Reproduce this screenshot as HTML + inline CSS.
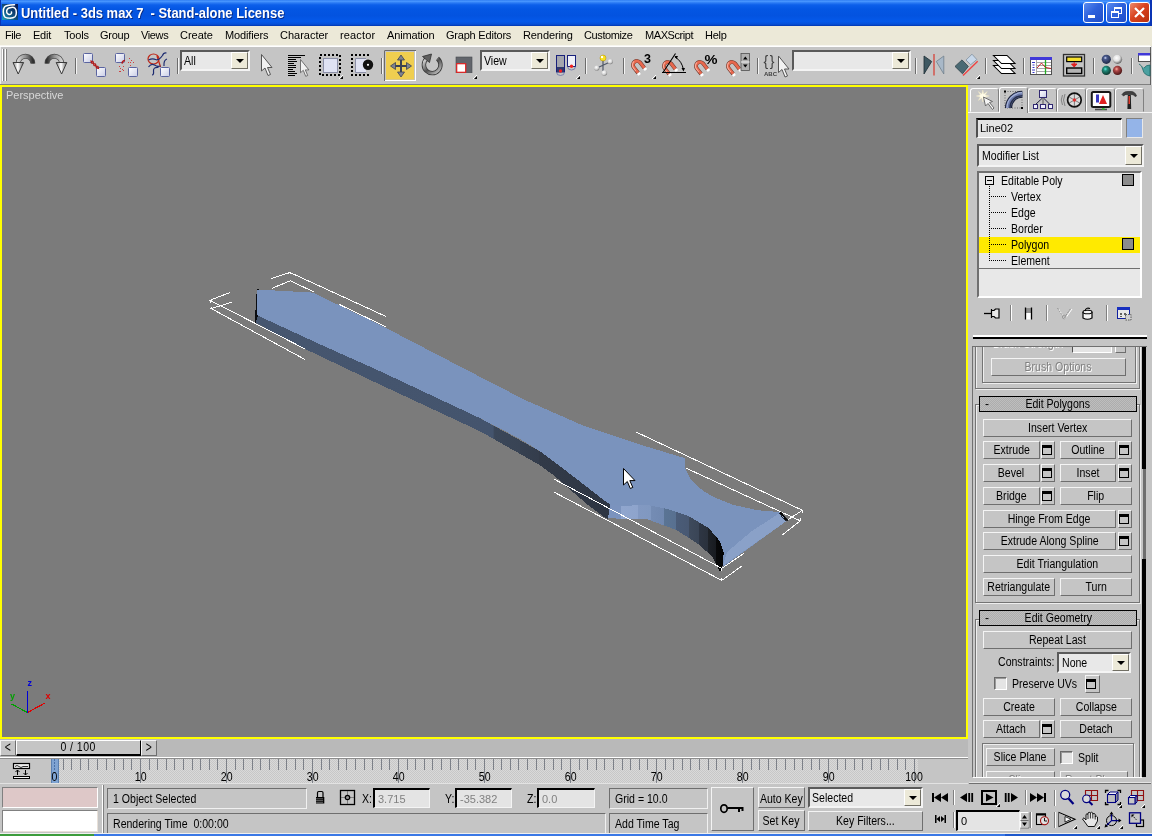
<!DOCTYPE html>
<html>
<head>
<meta charset="utf-8">
<title>Untitled - 3ds max 7 - Stand-alone License</title>
<style>
html,body{margin:0;padding:0;}
body{width:1152px;height:836px;overflow:hidden;background:#c5c5c5;position:relative;will-change:transform;font-family:"Liberation Sans",sans-serif;font-size:11px;color:#000;}
.a{position:absolute;box-sizing:border-box;}
.t{position:absolute;white-space:nowrap;line-height:13px;height:13px;}
/* raised 3ds max button */
.btn{position:absolute;box-sizing:border-box;background:#c5c5c5;border:1px solid;border-color:#f4f4f4 #6e6e6e #6e6e6e #f4f4f4;text-align:center;white-space:nowrap;line-height:15px;font-size:11px;}
/* sunken field */
.fld{position:absolute;box-sizing:border-box;background:#e4e4e4;border:1px solid;border-color:#6e6e6e #fff #fff #6e6e6e;white-space:nowrap;}
.fld2{position:absolute;box-sizing:border-box;background:#e4e4e4;border:2px solid;border-color:#404040 #fff #fff #404040;white-space:nowrap;}
.sepv{position:absolute;width:2px;border-left:1px solid #808080;border-right:1px solid #fff;box-sizing:border-box;}
svg{position:absolute;overflow:visible;}

/* combo */
.cmb{position:absolute;box-sizing:border-box;background:#e8e8e8;border:2px solid;border-color:#5a5a5a #f4f4f4 #f4f4f4 #5a5a5a;}
.cmb .dd{position:absolute;right:0;top:0;bottom:0;width:17px;box-sizing:border-box;background:#ece9d8;border:1px solid;border-color:#fff #716f64 #716f64 #fff;}
.cmb .dd:after{content:"";position:absolute;left:4px;top:50%;margin-top:-2px;border:4px solid transparent;border-top:4px solid #000;border-bottom:none;width:0;height:0;}
.u{display:inline-block;font-size:12px;transform:scaleX(.88);transform-origin:0 50%;white-space:pre;}
.uc{display:inline-block;font-size:12px;transform:scaleX(.88);transform-origin:50% 50%;white-space:pre;margin:0 -20px;}

.tab{position:absolute;box-sizing:border-box;border:1px solid;border-color:#fff #808080 transparent #fff;border-radius:3px 3px 0 0;background:#c5c5c5;}
.tab.act{border-bottom:none;}
.rh{position:absolute;box-sizing:border-box;border:1px solid #000;background:repeating-conic-gradient(#bebebe 0% 25%,#adadad 0% 50%) 0 0/2px 2px;text-align:center;line-height:14px;}
.rh b{position:absolute;left:5px;top:0;font-weight:normal;font-size:12px;}
.dis{color:#808080;text-shadow:1px 1px 0 #fff;}
.chk{position:absolute;box-sizing:border-box;width:13px;height:13px;background:#e4e4e4;border:1px solid;border-color:#6a6a6a #fff #fff #6a6a6a;box-shadow:inset 1px 1px 0 #9a9a9a;}
.wi{position:absolute;left:0px;top:3px;width:10px;height:10px;box-sizing:border-box;border:1px solid #000;border-top-width:3px;}
/* title */
#title{left:0;top:0;width:1152px;height:26px;background:linear-gradient(to bottom,#2e7cf2 0%,#4a98ff 5%,#2a7af4 11%,#0c5fea 19%,#0456e3 35%,#0353e0 60%,#0559ea 82%,#0650d8 93%,#0236b0 100%);}
#title .cap{position:absolute;left:21px;top:5px;font-weight:bold;font-size:14px;color:#fff;line-height:16px;white-space:pre;text-shadow:1px 1px 0 #0a2a80;transform:scaleX(.925);transform-origin:0 50%;}
.wb{position:absolute;top:2px;width:21px;height:21px;box-sizing:border-box;border:1px solid #fff;border-radius:3px;background:linear-gradient(135deg,#5a8cf0 0%,#2e62dc 45%,#1f4dc8 100%);}
.wb.x{background:linear-gradient(135deg,#ec8a6c 0%,#d9431f 45%,#b8300f 100%);}
/* menu */
#menu{left:0;top:26px;width:1152px;height:20px;background:#ece9d8;}
#menu span{position:absolute;top:3px;line-height:13px;font-size:11px;}
/* toolbar */
#tb{left:0;top:46px;width:1152px;height:39px;background:#c5c5c5;border-top:1px solid #fff;border-bottom:1px solid #808080;}
/* viewport */
#vp{left:0;top:85px;width:968px;height:654px;background:#7b7b7b;border:2px solid #ffff00;}
</style>
</head>
<body>
<!-- TITLE BAR -->
<div id="title" class="a">
<svg style="left:2px;top:4px" width="16" height="16" viewBox="0 0 16 16"><defs><linearGradient id="gLogo" x1="0" y1="1" x2="1" y2="0"><stop offset="0" stop-color="#1aa0c0"/><stop offset=".45" stop-color="#10507c"/><stop offset="1" stop-color="#0a1450"/></linearGradient></defs><rect width="16" height="16" fill="url(#gLogo)"/><path d="M12.500,0.800 C9,1 4,1.200 2.500,3 C0.800,5 1,10.500 2.500,12.600 C4,14.600 11,14.600 13,12.800 C14.800,11 14.800,6 13,4.200 C11.500,2.800 7,3.200 5.500,5 C4,7 4.500,9.500 6.500,10.300 C8.500,11 10,9.500 9.500,8" fill="none" stroke="#fff" stroke-width="1.500" stroke-linecap="round"/></svg>
<div class="cap">Untitled - 3ds max 7  - Stand-alone License</div>
<div class="a" style="left:1150px;top:0;width:2px;height:26px;background:#0a34b4"></div><div class="a" style="left:0;top:0;width:1px;height:26px;background:#0a34b4"></div><div class="wb" style="left:1083px"><div class="a" style="left:4px;top:12px;width:7px;height:3px;background:#fff"></div></div>
<div class="wb" style="left:1106px"><div class="a" style="left:7px;top:4px;width:8px;height:7px;border:1px solid #fff;border-top-width:2px"></div><div class="a" style="left:4px;top:8px;width:8px;height:7px;border:1px solid #fff;border-top-width:2px;background:#2e62dc"></div></div>
<div class="wb x" style="left:1129px"><svg style="left:4px;top:4px" width="11" height="11" viewBox="0 0 11 11"><path d="M1 1L10 10M10 1L1 10" stroke="#fff" stroke-width="2.2"/></svg></div>
</div>
<!-- MENU BAR -->
<div id="menu" class="a">
<span style="left:5px;letter-spacing:-0.43px">File</span><span style="left:33px;letter-spacing:-0.22px">Edit</span><span style="left:64px;letter-spacing:-0.20px">Tools</span><span style="left:100px;letter-spacing:-0.24px">Group</span><span style="left:141px;letter-spacing:-0.37px">Views</span><span style="left:180px;letter-spacing:-0.02px">Create</span><span style="left:225px;letter-spacing:-0.15px">Modifiers</span><span style="left:280px;letter-spacing:-0.01px">Character</span><span style="left:340px;letter-spacing:0.15px">reactor</span><span style="left:387px;letter-spacing:-0.16px">Animation</span><span style="left:446px;letter-spacing:-0.21px">Graph Editors</span><span style="left:523px;letter-spacing:-0.10px">Rendering</span><span style="left:584px;letter-spacing:-0.39px">Customize</span><span style="left:645px;letter-spacing:-0.42px">MAXScript</span><span style="left:705px;letter-spacing:-0.28px">Help</span>
</div>
<div class="a" style="left:0;top:45px;width:1150px;height:1px;background:#f8f7f0"></div>
<!-- TOOLBAR -->
<div id="tb" class="a">
<div class="cmb" style="left:180px;top:3px;width:70px;height:21px"><span class="u" style="position:absolute;left:2px;top:2px;line-height:14px">All</span><div class="dd"></div></div>
<div class="cmb" style="left:480px;top:3px;width:70px;height:21px"><span class="u" style="position:absolute;left:2px;top:2px;line-height:14px">View</span><div class="dd"></div></div>
<div class="cmb" style="left:792px;top:3px;width:119px;height:21px"><div class="dd"></div></div>
<div class="a" style="left:1150px;top:0;width:1px;height:38px;background:#606060"></div><div class="a" style="left:1151px;top:-1px;width:1px;height:40px;background:#d8d8d8"></div>

</div>
<!-- VIEWPORT -->
<div id="vp" class="a">
<div class="t" style="left:4px;top:2px;color:#d8d8d8">Perspective</div>
<!--VPSVG-START-->
<svg style="left:-2px;top:-87px" width="968" height="741" viewBox="0 0 968 741" shape-rendering="crispEdges">
<defs>
<linearGradient id="gSide" gradientUnits="userSpaceOnUse" x1="255" y1="0" x2="610" y2="0"><stop offset="0" stop-color="#46566f"/><stop offset=".67" stop-color="#44546d"/><stop offset=".675" stop-color="#3b4759"/><stop offset=".746" stop-color="#394455"/><stop offset=".746" stop-color="#364050"/><stop offset=".80" stop-color="#343d4c"/><stop offset=".80" stop-color="#323a48"/><stop offset=".9" stop-color="#303846"/><stop offset="1" stop-color="#2d3542"/></linearGradient>
<linearGradient id="gWall" gradientUnits="userSpaceOnUse" x1="610" y1="0" x2="724" y2="0"><stop offset="0" stop-color="#7b93be"/><stop offset=".10" stop-color="#7b93be"/><stop offset=".10" stop-color="#90a6ce"/><stop offset=".25" stop-color="#8ea4cc"/><stop offset=".25" stop-color="#8299c2"/><stop offset=".36" stop-color="#8098c0"/><stop offset=".36" stop-color="#748cb4"/><stop offset=".478" stop-color="#7088b0"/><stop offset=".478" stop-color="#5a7494"/><stop offset=".578" stop-color="#587090"/><stop offset=".578" stop-color="#4a5c78"/><stop offset=".696" stop-color="#485872"/><stop offset=".696" stop-color="#3e4a5c"/><stop offset=".78" stop-color="#3a4556"/><stop offset=".78" stop-color="#2e3644"/><stop offset=".863" stop-color="#2a313c"/><stop offset=".863" stop-color="#1e2228"/><stop offset=".93" stop-color="#181b20"/><stop offset=".93" stop-color="#08090a"/><stop offset="1" stop-color="#040405"/></linearGradient>
</defs>
<g fill="none" stroke="#fff" stroke-width="1">
<!-- back brackets (behind object) -->
<path d="M272,288.300 L290.300,280.800 L314,292 M339,304.300 L385.800,326.800"/>
<path d="M686.400,468.300 L800.300,520.800"/>
</g>
<!-- side face -->
<path d="M255.200,322.500 L257.300,289.500 L257,315.200 L321.500,345 L380,371.200 L480,418.200 L540.300,451.500 L559.500,465.900 L579.800,481.400 L601.300,498.200 L610.300,504.800 L608.300,519.300 L603.700,516.700 L587,504.200 L570.200,489.800 L554.700,476 L539.100,464.700 L480,431.250 L380,384.600 L304.200,348.500 Z" fill="url(#gSide)"/>
<path d="M255.200,322.500 L257.300,289.500 L258.300,289.500 L257.300,315.500 Z" fill="#0a0c10" stroke="#0a0c10" stroke-width="1"/>
<!-- concave wall -->
<path d="M610,504 L621.500,505.900 L647.300,504.900 L666.400,508.750 L689.300,516.400 L708.400,527.900 L719.900,541.200 L723.700,552.700 L722.700,566 L719.900,571.800 L712.200,556.500 L697,543.100 L675.900,529.800 L647.300,519.300 L608.100,518.300 Z" fill="url(#gWall)"/>
<!-- top face -->
<path d="M257.300,289.500 L312.800,292.600 L380,324.900 L484.200,379 L525.100,400 L584.200,426 L636.300,443.400 L684.500,458.100 L685.500,468.600 L690,478 L697,485.800 L705,492 L714.100,497.300 L733.200,504.900 L758,510.300 L781,512.200 L787.700,520.200 L722.700,567 L723.700,552.700 L719.900,541.200 L708.400,527.900 L689.300,516.400 L666.400,508.750 L647.300,504.900 L621.500,505.900 L610.300,504.800 L601.300,498.200 L579.800,481.400 L559.500,465.900 L540.300,451.500 L520,439 L480,418.200 L380,371.200 L321.500,345 L257,315.200 Z" fill="#7a93bd"/>
<path d="M722.700,566 L787.700,520.200 L779,513.500 L752,531 L727,552 Z" fill="#a9bcde" opacity=".35"/>
<path d="M781,512.200 L787.700,520.200 L786,520.500 L779.500,512.500 Z" fill="#050506" stroke="#050506" stroke-width=".8"/>
<!-- front brackets -->
<g fill="none" stroke="#fff" stroke-width="1">
<path d="M229.900,292.500 L210,300.300 L305,348.900 M210,300.300 L210.300,302.800 M211,306.500 L211.300,308.600 M231.600,302.200 L211.300,308.600 L305,359.500"/>
<path d="M271.200,278.600 L290,272.500 L385.800,316.400 M290,272.500 L290.100,274.500"/>
<path d="M636.300,432.100 L802.400,510.300 L787.700,519.800 M802.400,510.300 L802,513 M800.800,518.500 L800.300,520.800 L782,535.100"/>
<path d="M553.800,479 L721.800,568.300 L743.700,553.600 M721.800,568.300 L721.800,571 M721.800,578 L721.800,580.400 M553.800,492 L721.800,580.400 L741.800,566"/>
</g>
<!-- axis tripod -->
<g stroke-width="1.200" fill="none"><path d="M27.500,712.500 L45,703" stroke="#e00000"/><path d="M27.500,712.500 L11.500,704" stroke="#00a000"/><path d="M27.500,712.500 V691" stroke="#0000d8"/></g>
<g font-family="Liberation Sans,sans-serif" font-size="9" font-weight="bold"><text x="27.500" y="686" fill="#0000d8">z</text><text x="10" y="699" fill="#00a000">y</text><text x="45.500" y="699" fill="#e00000">x</text></g>
<!-- mouse cursor -->
<path d="M623.500,468.500 V485 L627.300,481.500 L630.300,488.500 L632.800,487.400 L629.800,480.600 L635,480.600 Z" fill="#fff" stroke="#000" stroke-width="1" shape-rendering="auto"/>
</svg>
<!--VPSVG-END-->
</div>
<!--PANEL-START-->
<div class="a" style="left:968px;top:85px;width:184px;height:698px;background:#c5c5c5"></div>
<div class="a" style="left:968px;top:112px;width:184px;height:1px;background:#f4f4f4"></div>
<div class="tab" style="left:970px;top:88px;width:29px;height:24px"></div>
<div class="tab act" style="left:999px;top:87px;width:29px;height:26px"></div>
<div class="tab" style="left:1028px;top:88px;width:29px;height:24px"></div>
<div class="tab" style="left:1057px;top:88px;width:29px;height:24px"></div>
<div class="tab" style="left:1086px;top:88px;width:29px;height:24px"></div>
<div class="tab" style="left:1115px;top:88px;width:29px;height:24px"></div>
<div class="a" style="left:976px;top:118px;width:146px;height:20px;background:#e4e4e4;border:1px solid;border-color:#000 #fff #fff #505050;border-top-width:2px;border-left-width:2px"><span class="t" style="left:2px;top:2px;font-size:11px">Line02</span></div>
<div class="a" style="left:1126px;top:118px;width:17px;height:20px;background:#94b4e8;border:1px solid;border-color:#808080 #e8e8e8 #e8e8e8 #808080"></div>
<div class="cmb" style="left:977px;top:144px;width:167px;height:23px"><span class="u" style="position:absolute;left:3px;top:3px;line-height:14px">Modifier List</span><div class="dd" style="width:17px"></div></div>
<div class="a" style="left:977px;top:171px;width:165px;height:127px;background:#e8e8e8;border:2px solid;border-color:#707070 #fff #fff #707070"></div>
<div class="a" style="left:979px;top:237px;width:161px;height:16px;background:#ffea00"></div>
<div class="a" style="left:979px;top:268px;width:161px;height:1px;background:#707070"></div>
<div class="a" style="left:985px;top:176px;width:9px;height:9px;border:1px solid #000;background:#e8e8e8"><div class="a" style="left:1px;top:3px;width:5px;height:1px;background:#000"></div></div>
<div class="a" style="left:989px;top:186px;width:1px;height:75px;background:repeating-linear-gradient(to bottom,#000 0 1px,transparent 1px 2px)"></div>
<div class="a" style="left:991px;top:196px;width:15px;height:1px;background:repeating-linear-gradient(to right,#000 0 1px,transparent 1px 2px)"></div>
<div class="a" style="left:991px;top:212px;width:15px;height:1px;background:repeating-linear-gradient(to right,#000 0 1px,transparent 1px 2px)"></div>
<div class="a" style="left:991px;top:228px;width:15px;height:1px;background:repeating-linear-gradient(to right,#000 0 1px,transparent 1px 2px)"></div>
<div class="a" style="left:991px;top:244px;width:15px;height:1px;background:repeating-linear-gradient(to right,#000 0 1px,transparent 1px 2px)"></div>
<div class="a" style="left:991px;top:260px;width:15px;height:1px;background:repeating-linear-gradient(to right,#000 0 1px,transparent 1px 2px)"></div>
<span class="u t" style="left:1001px;top:175px;">Editable Poly</span>
<span class="u t" style="left:1011px;top:191px;">Vertex</span>
<span class="u t" style="left:1011px;top:207px;">Edge</span>
<span class="u t" style="left:1011px;top:223px;">Border</span>
<span class="u t" style="left:1011px;top:239px;">Polygon</span>
<span class="u t" style="left:1011px;top:255px;">Element</span>
<div class="a" style="left:1122px;top:174px;width:12px;height:12px;border:1px solid #000;background:#8c8c8c"></div>
<div class="a" style="left:1122px;top:238px;width:12px;height:12px;border:1px solid #000;background:#8c8c8c"></div>
<div class="a" style="left:973px;top:335px;width:174px;height:2px;background:#fff"></div>
<div class="a" style="left:973px;top:337px;width:174px;height:2px;background:#000"></div>
<div id="roll" class="a" style="left:972px;top:346px;width:175px;height:431px;overflow:hidden;border-left:1px solid #707070;border-top:1px solid #707070"></div>
<div class="a" style="left:1142px;top:347px;width:4px;height:122px;background:#000"></div>
<div class="a" style="left:1143px;top:469px;width:3px;height:90px;background:#6e6e6e"></div>
<div class="a" style="left:1142px;top:559px;width:4px;height:218px;background:#000"></div>
<div class="a" style="left:973px;top:347px;width:168px;height:430px;overflow:hidden"><div class="a" style="left:-973px;top:-347px;width:1152px;height:836px"><div class="a" style="left:975px;top:340px;width:165px;height:49px;border:1px solid #747474;box-shadow:1px 1px 0 #eeeeee, inset 1px 1px 0 #eeeeee;border-top:none;"></div><div class="a" style="left:982px;top:340px;width:154px;height:43px;border:1px solid #747474;box-shadow:1px 1px 0 #eeeeee, inset 1px 1px 0 #eeeeee;border-top:none;"></div><div class="btn dis" style="left:991px;top:358px;width:135px;height:18px;line-height:16px"><span class="uc">Brush Options</span></div><span class="u t dis" style="left:992px;top:337px">Brush Strength</span><div class="a" style="left:1072px;top:339px;width:40px;height:14px;background:#e4e4e4;border:1px solid;border-color:#505050 #fff #fff #505050"></div><div class="a" style="left:1115px;top:339px;width:11px;height:14px;border:1px solid;border-color:#fff #6e6e6e #6e6e6e #fff"></div><div class="a" style="left:975px;top:404px;width:165px;height:199px;border:1px solid #747474;box-shadow:1px 1px 0 #eeeeee, inset 1px 1px 0 #eeeeee;"></div><div class="rh" style="left:979px;top:396px;width:158px;height:16px"><b>-</b><span class="uc">Edit Polygons</span></div><div class="btn " style="left:983px;top:419px;width:149px;height:18px;line-height:16px;"><span class="uc">Insert Vertex</span></div><div class="btn " style="left:983px;top:441px;width:57px;height:18px;line-height:16px;"><span class="uc">Extrude</span></div><div class="btn" style="left:1041px;top:441px;width:14px;height:18px"><i class="wi"></i></div><div class="btn " style="left:1060px;top:441px;width:56px;height:18px;line-height:16px;"><span class="uc">Outline</span></div><div class="btn" style="left:1118px;top:441px;width:14px;height:18px"><i class="wi"></i></div><div class="btn " style="left:983px;top:464px;width:57px;height:18px;line-height:16px;"><span class="uc">Bevel</span></div><div class="btn" style="left:1041px;top:464px;width:14px;height:18px"><i class="wi"></i></div><div class="btn " style="left:1060px;top:464px;width:56px;height:18px;line-height:16px;"><span class="uc">Inset</span></div><div class="btn" style="left:1118px;top:464px;width:14px;height:18px"><i class="wi"></i></div><div class="btn " style="left:983px;top:487px;width:57px;height:18px;line-height:16px;"><span class="uc">Bridge</span></div><div class="btn" style="left:1041px;top:487px;width:14px;height:18px"><i class="wi"></i></div><div class="btn " style="left:1060px;top:487px;width:72px;height:18px;line-height:16px;"><span class="uc">Flip</span></div><div class="btn " style="left:983px;top:510px;width:133px;height:18px;line-height:16px;"><span class="uc">Hinge From Edge</span></div><div class="btn" style="left:1118px;top:510px;width:14px;height:18px"><i class="wi"></i></div><div class="btn " style="left:983px;top:532px;width:133px;height:18px;line-height:16px;"><span class="uc">Extrude Along Spline</span></div><div class="btn" style="left:1118px;top:532px;width:14px;height:18px"><i class="wi"></i></div><div class="btn " style="left:983px;top:555px;width:149px;height:18px;line-height:16px;"><span class="uc">Edit Triangulation</span></div><div class="btn " style="left:983px;top:578px;width:72px;height:18px;line-height:16px;"><span class="uc">Retriangulate</span></div><div class="btn " style="left:1060px;top:578px;width:72px;height:18px;line-height:16px;"><span class="uc">Turn</span></div><div class="a" style="left:975px;top:619px;width:165px;height:181px;border:1px solid #747474;box-shadow:1px 1px 0 #eeeeee, inset 1px 1px 0 #eeeeee;border-bottom:none;"></div><div class="rh" style="left:979px;top:610px;width:158px;height:16px"><b>-</b><span class="uc">Edit Geometry</span></div><div class="btn " style="left:983px;top:631px;width:149px;height:18px;line-height:16px;"><span class="uc">Repeat Last</span></div><span class="u t" style="left:998px;top:656px;">Constraints:</span><div class="cmb" style="left:1057px;top:652px;width:74px;height:21px"><span class="u" style="position:absolute;left:3px;top:2px;line-height:14px">None</span><div class="dd" style="width:17px"></div></div><div class="chk" style="left:994px;top:677px"></div><span class="u t" style="left:1012px;top:678px;">Preserve UVs</span><div class="btn" style="left:1085px;top:675px;width:15px;height:18px"><i class="wi"></i></div><div class="btn " style="left:983px;top:698px;width:72px;height:18px;line-height:16px;"><span class="uc">Create</span></div><div class="btn " style="left:1060px;top:698px;width:72px;height:18px;line-height:16px;"><span class="uc">Collapse</span></div><div class="btn " style="left:983px;top:720px;width:57px;height:18px;line-height:16px;"><span class="uc">Attach</span></div><div class="btn" style="left:1041px;top:720px;width:14px;height:18px"><i class="wi"></i></div><div class="btn " style="left:1060px;top:720px;width:72px;height:18px;line-height:16px;"><span class="uc">Detach</span></div><div class="a" style="left:982px;top:743px;width:152px;height:57px;border:1px solid #747474;box-shadow:1px 1px 0 #eeeeee, inset 1px 1px 0 #eeeeee;border-bottom:none;"></div><div class="btn " style="left:986px;top:748px;width:69px;height:18px;line-height:16px;"><span class="uc">Slice Plane</span></div><div class="chk" style="left:1060px;top:751px"></div><span class="u t" style="left:1078px;top:752px;">Split</span><div class="btn " style="left:986px;top:771px;width:69px;height:18px;line-height:16px;"><span class="uc"><span class="dis">Slice</span></span></div><div class="btn " style="left:1060px;top:771px;width:68px;height:18px;line-height:16px;"><span class="uc"><span class="dis">Reset Plane</span></span></div></div></div>
<div class="a" style="left:968px;top:777px;width:184px;height:6px;background:#c5c5c5"></div>
<div class="a" style="left:973px;top:777px;width:169px;height:1px;background:#fff"></div>
<div class="a" style="left:969px;top:782px;width:182px;height:1px;background:#e4e4e4"></div>
<div class="a" style="left:969px;top:783px;width:182px;height:1px;background:#707070"></div>
<!--PANEL-END-->
<!--BOTTOM-START-->
<div class="a" style="left:0;top:739px;width:968px;height:18px;background:#b9b9b9"></div>
<div class="btn" style="left:0;top:740px;width:16px;height:16px;line-height:13px"><span style="font-size:13px;display:inline-block;transform:scale(.8,1.1)">&lt;</span></div>
<div class="btn" style="left:16px;top:740px;width:125px;height:16px;line-height:13px;border-color:#fff #000 #000 #fff;border-bottom-width:2px"><span class="uc" style="letter-spacing:.5px">0 / 100</span></div>
<div class="btn" style="left:141px;top:740px;width:16px;height:16px;line-height:13px"><span style="font-size:13px;display:inline-block;transform:scale(.8,1.1)">&gt;</span></div>
<div class="a" style="left:0;top:757px;width:968px;height:1px;background:#fff"></div>
<div class="a" style="left:0;top:758px;width:968px;height:26px;background:#c5c5c5"></div>
<div class="a" style="left:0;top:758px;width:968px;height:1px;background:#8c8c8c"></div>
<div class="a" style="left:51px;top:759px;width:867px;height:25px;background:repeating-conic-gradient(#d9d9d9 0% 25%,#c7c7c7 0% 50%) 0 0/2px 2px"></div>
<div class="a" style="left:54px;top:759px;width:1px;height:25px;background:#7c8088"></div><div class="a" style="left:63px;top:759px;width:1px;height:11px;background:#7c8088"></div><div class="a" style="left:71px;top:759px;width:1px;height:11px;background:#7c8088"></div><div class="a" style="left:80px;top:759px;width:1px;height:11px;background:#7c8088"></div><div class="a" style="left:88px;top:759px;width:1px;height:11px;background:#7c8088"></div><div class="a" style="left:97px;top:759px;width:1px;height:11px;background:#7c8088"></div><div class="a" style="left:106px;top:759px;width:1px;height:11px;background:#7c8088"></div><div class="a" style="left:114px;top:759px;width:1px;height:11px;background:#7c8088"></div><div class="a" style="left:123px;top:759px;width:1px;height:11px;background:#7c8088"></div><div class="a" style="left:131px;top:759px;width:1px;height:11px;background:#7c8088"></div><div class="a" style="left:140px;top:759px;width:1px;height:25px;background:#7c8088"></div><div class="a" style="left:149px;top:759px;width:1px;height:11px;background:#7c8088"></div><div class="a" style="left:157px;top:759px;width:1px;height:11px;background:#7c8088"></div><div class="a" style="left:166px;top:759px;width:1px;height:11px;background:#7c8088"></div><div class="a" style="left:174px;top:759px;width:1px;height:11px;background:#7c8088"></div><div class="a" style="left:183px;top:759px;width:1px;height:11px;background:#7c8088"></div><div class="a" style="left:192px;top:759px;width:1px;height:11px;background:#7c8088"></div><div class="a" style="left:200px;top:759px;width:1px;height:11px;background:#7c8088"></div><div class="a" style="left:209px;top:759px;width:1px;height:11px;background:#7c8088"></div><div class="a" style="left:217px;top:759px;width:1px;height:11px;background:#7c8088"></div><div class="a" style="left:226px;top:759px;width:1px;height:25px;background:#7c8088"></div><div class="a" style="left:235px;top:759px;width:1px;height:11px;background:#7c8088"></div><div class="a" style="left:243px;top:759px;width:1px;height:11px;background:#7c8088"></div><div class="a" style="left:252px;top:759px;width:1px;height:11px;background:#7c8088"></div><div class="a" style="left:260px;top:759px;width:1px;height:11px;background:#7c8088"></div><div class="a" style="left:269px;top:759px;width:1px;height:11px;background:#7c8088"></div><div class="a" style="left:278px;top:759px;width:1px;height:11px;background:#7c8088"></div><div class="a" style="left:286px;top:759px;width:1px;height:11px;background:#7c8088"></div><div class="a" style="left:295px;top:759px;width:1px;height:11px;background:#7c8088"></div><div class="a" style="left:303px;top:759px;width:1px;height:11px;background:#7c8088"></div><div class="a" style="left:312px;top:759px;width:1px;height:25px;background:#7c8088"></div><div class="a" style="left:321px;top:759px;width:1px;height:11px;background:#7c8088"></div><div class="a" style="left:329px;top:759px;width:1px;height:11px;background:#7c8088"></div><div class="a" style="left:338px;top:759px;width:1px;height:11px;background:#7c8088"></div><div class="a" style="left:346px;top:759px;width:1px;height:11px;background:#7c8088"></div><div class="a" style="left:355px;top:759px;width:1px;height:11px;background:#7c8088"></div><div class="a" style="left:364px;top:759px;width:1px;height:11px;background:#7c8088"></div><div class="a" style="left:372px;top:759px;width:1px;height:11px;background:#7c8088"></div><div class="a" style="left:381px;top:759px;width:1px;height:11px;background:#7c8088"></div><div class="a" style="left:389px;top:759px;width:1px;height:11px;background:#7c8088"></div><div class="a" style="left:398px;top:759px;width:1px;height:25px;background:#7c8088"></div><div class="a" style="left:407px;top:759px;width:1px;height:11px;background:#7c8088"></div><div class="a" style="left:415px;top:759px;width:1px;height:11px;background:#7c8088"></div><div class="a" style="left:424px;top:759px;width:1px;height:11px;background:#7c8088"></div><div class="a" style="left:432px;top:759px;width:1px;height:11px;background:#7c8088"></div><div class="a" style="left:441px;top:759px;width:1px;height:11px;background:#7c8088"></div><div class="a" style="left:450px;top:759px;width:1px;height:11px;background:#7c8088"></div><div class="a" style="left:458px;top:759px;width:1px;height:11px;background:#7c8088"></div><div class="a" style="left:467px;top:759px;width:1px;height:11px;background:#7c8088"></div><div class="a" style="left:475px;top:759px;width:1px;height:11px;background:#7c8088"></div><div class="a" style="left:484px;top:759px;width:1px;height:25px;background:#7c8088"></div><div class="a" style="left:493px;top:759px;width:1px;height:11px;background:#7c8088"></div><div class="a" style="left:501px;top:759px;width:1px;height:11px;background:#7c8088"></div><div class="a" style="left:510px;top:759px;width:1px;height:11px;background:#7c8088"></div><div class="a" style="left:518px;top:759px;width:1px;height:11px;background:#7c8088"></div><div class="a" style="left:527px;top:759px;width:1px;height:11px;background:#7c8088"></div><div class="a" style="left:536px;top:759px;width:1px;height:11px;background:#7c8088"></div><div class="a" style="left:544px;top:759px;width:1px;height:11px;background:#7c8088"></div><div class="a" style="left:553px;top:759px;width:1px;height:11px;background:#7c8088"></div><div class="a" style="left:561px;top:759px;width:1px;height:11px;background:#7c8088"></div><div class="a" style="left:570px;top:759px;width:1px;height:25px;background:#7c8088"></div><div class="a" style="left:579px;top:759px;width:1px;height:11px;background:#7c8088"></div><div class="a" style="left:587px;top:759px;width:1px;height:11px;background:#7c8088"></div><div class="a" style="left:596px;top:759px;width:1px;height:11px;background:#7c8088"></div><div class="a" style="left:604px;top:759px;width:1px;height:11px;background:#7c8088"></div><div class="a" style="left:613px;top:759px;width:1px;height:11px;background:#7c8088"></div><div class="a" style="left:622px;top:759px;width:1px;height:11px;background:#7c8088"></div><div class="a" style="left:630px;top:759px;width:1px;height:11px;background:#7c8088"></div><div class="a" style="left:639px;top:759px;width:1px;height:11px;background:#7c8088"></div><div class="a" style="left:647px;top:759px;width:1px;height:11px;background:#7c8088"></div><div class="a" style="left:656px;top:759px;width:1px;height:25px;background:#7c8088"></div><div class="a" style="left:665px;top:759px;width:1px;height:11px;background:#7c8088"></div><div class="a" style="left:673px;top:759px;width:1px;height:11px;background:#7c8088"></div><div class="a" style="left:682px;top:759px;width:1px;height:11px;background:#7c8088"></div><div class="a" style="left:690px;top:759px;width:1px;height:11px;background:#7c8088"></div><div class="a" style="left:699px;top:759px;width:1px;height:11px;background:#7c8088"></div><div class="a" style="left:708px;top:759px;width:1px;height:11px;background:#7c8088"></div><div class="a" style="left:716px;top:759px;width:1px;height:11px;background:#7c8088"></div><div class="a" style="left:725px;top:759px;width:1px;height:11px;background:#7c8088"></div><div class="a" style="left:733px;top:759px;width:1px;height:11px;background:#7c8088"></div><div class="a" style="left:742px;top:759px;width:1px;height:25px;background:#7c8088"></div><div class="a" style="left:751px;top:759px;width:1px;height:11px;background:#7c8088"></div><div class="a" style="left:759px;top:759px;width:1px;height:11px;background:#7c8088"></div><div class="a" style="left:768px;top:759px;width:1px;height:11px;background:#7c8088"></div><div class="a" style="left:776px;top:759px;width:1px;height:11px;background:#7c8088"></div><div class="a" style="left:785px;top:759px;width:1px;height:11px;background:#7c8088"></div><div class="a" style="left:794px;top:759px;width:1px;height:11px;background:#7c8088"></div><div class="a" style="left:802px;top:759px;width:1px;height:11px;background:#7c8088"></div><div class="a" style="left:811px;top:759px;width:1px;height:11px;background:#7c8088"></div><div class="a" style="left:819px;top:759px;width:1px;height:11px;background:#7c8088"></div><div class="a" style="left:828px;top:759px;width:1px;height:25px;background:#7c8088"></div><div class="a" style="left:837px;top:759px;width:1px;height:11px;background:#7c8088"></div><div class="a" style="left:845px;top:759px;width:1px;height:11px;background:#7c8088"></div><div class="a" style="left:854px;top:759px;width:1px;height:11px;background:#7c8088"></div><div class="a" style="left:862px;top:759px;width:1px;height:11px;background:#7c8088"></div><div class="a" style="left:871px;top:759px;width:1px;height:11px;background:#7c8088"></div><div class="a" style="left:880px;top:759px;width:1px;height:11px;background:#7c8088"></div><div class="a" style="left:888px;top:759px;width:1px;height:11px;background:#7c8088"></div><div class="a" style="left:897px;top:759px;width:1px;height:11px;background:#7c8088"></div><div class="a" style="left:905px;top:759px;width:1px;height:11px;background:#7c8088"></div><div class="a" style="left:914px;top:759px;width:1px;height:25px;background:#7c8088"></div>
<div class="a" style="left:51px;top:759px;width:8px;height:25px;background:#7fa3d2;border-left:1px solid #5c80b0;border-right:1px solid #5c80b0"></div>
<div class="a" style="left:54px;top:759px;width:1px;height:12px;background:repeating-linear-gradient(to bottom,#4a70a8 0 2px,transparent 2px 3px)"></div>
<span class="t" style="left:39px;top:771px;width:31px;text-align:center;font-size:12px"><span class="uc">0</span></span>
<span class="t" style="left:125px;top:771px;width:31px;text-align:center;font-size:12px"><span class="uc">10</span></span>
<span class="t" style="left:211px;top:771px;width:31px;text-align:center;font-size:12px"><span class="uc">20</span></span>
<span class="t" style="left:297px;top:771px;width:31px;text-align:center;font-size:12px"><span class="uc">30</span></span>
<span class="t" style="left:383px;top:771px;width:31px;text-align:center;font-size:12px"><span class="uc">40</span></span>
<span class="t" style="left:469px;top:771px;width:31px;text-align:center;font-size:12px"><span class="uc">50</span></span>
<span class="t" style="left:555px;top:771px;width:31px;text-align:center;font-size:12px"><span class="uc">60</span></span>
<span class="t" style="left:641px;top:771px;width:31px;text-align:center;font-size:12px"><span class="uc">70</span></span>
<span class="t" style="left:727px;top:771px;width:31px;text-align:center;font-size:12px"><span class="uc">80</span></span>
<span class="t" style="left:813px;top:771px;width:31px;text-align:center;font-size:12px"><span class="uc">90</span></span>
<span class="t" style="left:899px;top:771px;width:31px;text-align:center;font-size:12px"><span class="uc">100</span></span>
<div class="a" style="left:0;top:784px;width:1152px;height:50px;background:#c5c5c5"></div>
<div class="a" style="left:0;top:783px;width:968px;height:1px;background:#e2e2e2"></div>
<div class="a" style="left:2px;top:787px;width:96px;height:21px;background:#dec8c8;border:1px solid;border-color:#808080 #fff #fff #808080"></div>
<div class="a" style="left:2px;top:810px;width:96px;height:22px;background:#fff;border:1px solid;border-color:#808080 #e8e0d8 #e8e0d8 #808080"></div>
<div class="a" style="left:102px;top:785px;width:1px;height:49px;background:#fff"></div><div class="a" style="left:103px;top:785px;width:1px;height:49px;background:#808080"></div>
<div class="a" style="left:107px;top:788px;width:200px;height:21px;border:1px solid;border-color:#6e6e6e #f0f0f0 #f0f0f0 #6e6e6e;"></div>
<span class="u t" style="left:113px;top:793px;">1 Object Selected</span>
<div class="a" style="left:107px;top:813px;width:499px;height:23px;border:1px solid;border-color:#6e6e6e #f0f0f0 #f0f0f0 #6e6e6e;"></div>
<span class="u t" style="left:113px;top:818px;">Rendering Time  0:00:00</span>
<div class="a" style="left:609px;top:788px;width:99px;height:21px;border:1px solid;border-color:#6e6e6e #f0f0f0 #f0f0f0 #6e6e6e;"></div>
<span class="u t" style="left:615px;top:793px;">Grid = 10.0</span>
<div class="a" style="left:609px;top:813px;width:99px;height:23px;border:1px solid;border-color:#6e6e6e #f0f0f0 #f0f0f0 #6e6e6e;"></div>
<span class="u t" style="left:615px;top:818px;">Add Time Tag</span>
<span class="u t" style="left:362px;top:793px;">X:</span>
<div class="a" style="left:373px;top:788px;width:57px;height:20px;background:#e4e4e4;border:1px solid;border-color:#000 #f4f4f4 #f4f4f4 #000;border-top-width:2px;border-left-width:2px"><span class="t" style="left:3px;top:3px;font-size:11px;color:#808080">3.715</span></div>
<span class="u t" style="left:445px;top:793px;">Y:</span>
<div class="a" style="left:455px;top:788px;width:57px;height:20px;background:#e4e4e4;border:1px solid;border-color:#000 #f4f4f4 #f4f4f4 #000;border-top-width:2px;border-left-width:2px"><span class="t" style="left:3px;top:3px;font-size:11px;color:#808080">-35.382</span></div>
<span class="u t" style="left:527px;top:793px;">Z:</span>
<div class="a" style="left:537px;top:788px;width:58px;height:20px;background:#e4e4e4;border:1px solid;border-color:#000 #f4f4f4 #f4f4f4 #000;border-top-width:2px;border-left-width:2px"><span class="t" style="left:3px;top:3px;font-size:11px;color:#808080">0.0</span></div>
<div class="btn" style="left:711px;top:787px;width:43px;height:44px"></div>
<div class="btn" style="left:758px;top:787px;width:47px;height:21px;line-height:19px;line-height:22px;"><span class="uc">Auto Key</span></div>
<div class="btn" style="left:758px;top:810px;width:47px;height:21px;line-height:19px;line-height:21px;"><span class="uc">Set Key</span></div>
<div class="cmb" style="left:808px;top:787px;width:115px;height:21px"><span class="u" style="position:absolute;left:2px;top:2px;line-height:14px">Selected</span><div class="dd" style="width:17px"></div></div>
<div class="btn" style="left:808px;top:811px;width:115px;height:20px;line-height:18px;"><span class="uc">Key Filters...</span></div>
<div class="a" style="left:956px;top:810px;width:64px;height:21px;background:#e4e4e4;border:1px solid;border-color:#000 #f4f4f4 #f4f4f4 #000;border-top-width:2px;border-left-width:2px"><span class="t" style="left:3px;top:3px;font-size:11px">0</span></div>
<div class="a" style="left:981px;top:790px;width:16px;height:15px;border:2px solid #000"></div>
<div class="a" style="left:0;top:833px;width:1152px;height:1px;background:#f0f0f0"></div>
<div class="a" style="left:0;top:834px;width:1152px;height:2px;background:#3a78e6"></div>
<div class="a" style="left:0;top:834px;width:94px;height:2px;background:#3c9c3c"></div>
<div class="a" style="left:1005px;top:834px;width:147px;height:2px;background:#1e58cc"></div>
<!--BOTTOM-END-->
<!--ICONS-START-->
<svg id="ico" style="left:0;top:0" width="1152" height="836" viewBox="0 0 1152 836">
<defs>
<linearGradient id="gArrL" x1="0" y1="0" x2="1" y2="0"><stop offset="0" stop-color="#d0d0d0"/><stop offset=".5" stop-color="#909090"/><stop offset="1" stop-color="#303030"/></linearGradient>
<linearGradient id="gArrR" x1="1" y1="0" x2="0" y2="0"><stop offset="0" stop-color="#d0d0d0"/><stop offset=".5" stop-color="#909090"/><stop offset="1" stop-color="#303030"/></linearGradient>
<linearGradient id="gHead" x1="0" y1="0" x2="1" y2="0"><stop offset="0" stop-color="#8a8a8a"/><stop offset=".45" stop-color="#ffffff"/><stop offset="1" stop-color="#6a6a6a"/></linearGradient><linearGradient id="gBox" x1="0" y1="0" x2="1" y2="1"><stop offset="0" stop-color="#ffffff"/><stop offset="1" stop-color="#c9cde6"/></linearGradient>
<linearGradient id="gRot" x1="0" y1="0" x2="1" y2="1"><stop offset="0" stop-color="#e8e8e8"/><stop offset=".5" stop-color="#505050"/><stop offset="1" stop-color="#d0d0d0"/></linearGradient>
<radialGradient id="gS1" cx=".4" cy=".35" r=".7"><stop offset="0" stop-color="#d8e0ff"/><stop offset=".25" stop-color="#4a5a8c"/><stop offset="1" stop-color="#1c2440"/></radialGradient>
<radialGradient id="gS2" cx=".4" cy=".35" r=".7"><stop offset="0" stop-color="#ffffff"/><stop offset=".5" stop-color="#e0e0e0"/><stop offset="1" stop-color="#505050"/></radialGradient>
<radialGradient id="gS3" cx=".4" cy=".35" r=".7"><stop offset="0" stop-color="#60f0e0"/><stop offset=".3" stop-color="#208878"/><stop offset="1" stop-color="#0c3028"/></radialGradient>
<radialGradient id="gS4" cx=".4" cy=".35" r=".7"><stop offset="0" stop-color="#ffb0a0"/><stop offset=".3" stop-color="#b04848"/><stop offset="1" stop-color="#401010"/></radialGradient>
<radialGradient id="gBall" cx=".4" cy=".35" r=".7"><stop offset="0" stop-color="#ffffff"/><stop offset=".6" stop-color="#d0d0d0"/><stop offset="1" stop-color="#707070"/></radialGradient>
<g id="mag"><g transform="rotate(-38)"><path d="M-4,7 L-4,0 A4,4 0 0 1 4,0 L4,7" fill="none" stroke="#6a3a30" stroke-width="3.8"/><path d="M-4,7 L-4,0 A4,4 0 0 1 4,0 L4,7" fill="none" stroke="#e8684e" stroke-width="2.8"/><path d="M-4.6,4 L-4.6,0 A4.6,4.6 0 0 1 0,-4.6" fill="none" stroke="#f8b0a0" stroke-width="1"/><path d="M-4,7 L-4,9.5 M4,7 L4,9.5" stroke="#fff" stroke-width="3"/></g></g>
<g id="fly"><path d="M0,3 L3,0 L3,3 Z" fill="#000"/><path d="M-1,3 L3,-1" stroke="#fff" stroke-width="1" fill="none"/></g>
<g id="cur"><path d="M0,0 L0,16.500 L3.500,13.500 L6.500,21 L9,20 L6,13 L10.500,13 Z" fill="#f2f2f2" stroke="#555" stroke-width="1"/></g>
</defs>
<!-- grip -->
<path d="M2.500,49 V81 M5.500,49 V81" stroke="#fff" stroke-width="1"/><path d="M3.500,49 V81 M6.500,49 V81" stroke="#808080" stroke-width="1"/><path d="M0.500,47 V84" stroke="#ececec" stroke-width="1"/>
<!-- undo -->
<path d="M18.2,63.5 A7.3,7.3 0 0 1 32.8,63.5" fill="none" stroke="#4a4a4a" stroke-width="5"/>
<path d="M18.2,63.5 A7.3,7.3 0 0 1 32.8,63.5" fill="none" stroke="url(#gArrL)" stroke-width="3.6"/>
<path d="M13,62.5 L23.6,62.5 L18.2,74 Z" fill="url(#gHead)" stroke="#3a3a3a" stroke-width="1"/>
<!-- redo -->
<path d="M47,63.5 A7.3,7.3 0 0 1 61.6,63.5" fill="none" stroke="#4a4a4a" stroke-width="5"/>
<path d="M47,63.5 A7.3,7.3 0 0 1 61.6,63.5" fill="none" stroke="url(#gArrR)" stroke-width="3.6"/>
<path d="M56.2,62.5 L66.8,62.5 L61.6,74 Z" fill="url(#gHead)" stroke="#3a3a3a" stroke-width="1"/>
<!-- separators -->
<path d="M75.5,58 V74 M177.5,58 V74 M381.5,58 V74 M585.5,58 V74 M623.5,58 V74 M757.5,58 V74 M915.5,58 V74 M985.5,58 V74 M1023.5,58 V74 M1093.5,58 V74 M1131.5,58 V74" stroke="#6c6c6c" stroke-width="1"/>
<path d="M76.5,58 V74 M178.5,58 V74 M382.5,58 V74 M586.5,58 V74 M624.5,58 V74 M758.5,58 V74 M916.5,58 V74 M986.5,58 V74 M1024.5,58 V74 M1094.5,58 V74 M1132.5,58 V74" stroke="#f4f4f4" stroke-width="1"/>
<!-- select & link -->
<rect x="83.5" y="53.5" width="9" height="9" rx="1" fill="url(#gBox)" stroke="#5a64a0"/>
<rect x="96.5" y="67.5" width="9" height="9" rx="1" fill="url(#gBox)" stroke="#5a64a0"/>
<path d="M91,61 l2,0.5 l0.5,2 l-2,-0.5 z M93.5,63.5 l2,0.5 l0.5,2 l-2,-0.5z M96,66 l2,0.5 l0.5,2 l-2,-0.5z" fill="none" stroke="#b01818" stroke-width="1.2"/>
<!-- unlink -->
<rect x="115.5" y="53.5" width="9" height="9" rx="1" fill="url(#gBox)" stroke="#5a64a0"/>
<rect x="128.5" y="67.5" width="9" height="9" rx="1" fill="url(#gBox)" stroke="#5a64a0"/>
<path d="M122,63.5 q0.5,-3 3,-3" fill="none" stroke="#b01818" stroke-width="1.6"/>
<g fill="#d04040"><rect x="129" y="58" width="1" height="1"/><rect x="131" y="60" width="1" height="1"/><rect x="128" y="62" width="1" height="1"/><rect x="130" y="62" width="1" height="1"/><rect x="133" y="62" width="1" height="1"/><rect x="119" y="66" width="1" height="1"/><rect x="123" y="66" width="1" height="1"/><rect x="120" y="68" width="1" height="1"/><rect x="122" y="69" width="1" height="1"/><rect x="119" y="71" width="2" height="1"/><rect x="123" y="70" width="1" height="1"/><rect x="130" y="65" width="1" height="1"/></g>
<!-- bind space warp -->
<ellipse cx="153.5" cy="59" rx="5.5" ry="5" fill="none" stroke="#c02818" stroke-width="1.2"/>
<path d="M157,56 q2,6 3.5,11" fill="none" stroke="#c02818" stroke-width="1.3"/>
<path d="M148.5,60 q4,-2 7,-0.5 t7,-4 q1,-3 4,-2.5 M148.5,67 q3,-4 6,-2 t6,1 M152,75 q2,0 1.5,-4 t5,-3.5 M164,66 q-0.5,-6 3,-7" fill="none" stroke="#1c2a70" stroke-width="1.2"/>
<rect x="160.5" y="67.5" width="9" height="9" rx="1" fill="url(#gBox)" stroke="#5a64a0"/>
<!-- select arrow -->
<use href="#cur" x="261.5" y="54.5"/>
<!-- select by name -->
<path d="M288,55.5h17M288,57.5h13M288,59.5h8M288,61.5h9M288,63.5h6M288,65.5h8M288,67.5h8M288,69.5h5M288,71.5h7M288,73.5h9M288,75.5h7" stroke="#000" stroke-width="1.050"/>
<use href="#cur" x="300.5" y="59.5" transform="translate(300.5,59.5) scale(.8) translate(-300.5,-59.5)"/>
<!-- rect region -->
<rect x="320" y="55" width="20" height="20" fill="none" stroke="#000" stroke-width="2" stroke-dasharray="2 2"/>
<rect x="323.500" y="58.500" width="14" height="14" fill="#dfe2f2" stroke="#8c90a8"/>
<use href="#fly" x="340" y="76"/>
<!-- window/crossing -->
<path d="M369,55 H352 V75 H369" fill="none" stroke="#000" stroke-width="2" stroke-dasharray="2 2"/>
<path d="M366,58.500 H355.500 V72.500 H366" fill="#dfe2f2" stroke="#8c90a8"/>
<circle cx="368" cy="64.800" r="5.200" fill="#111"/>
<circle cx="368" cy="64.800" r="1.100" fill="#fff"/>
<!-- move (active) -->
<rect x="384.500" y="50.500" width="31" height="30" fill="#c5c5c5" stroke="#fff"/>
<path d="M384.500,81 V50.500 H416" fill="none" stroke="#6a6a6a"/>
<rect x="386" y="52" width="28" height="27.500" fill="#efce50"/>
<path d="M401,57 V75 M392,66 H410" stroke="#3c4252" stroke-width="2"/>
<path d="M401,55 L404.500,60 H397.500Z M401,77 L404.500,72 H397.500Z M390.500,66 L395.500,62.500 V69.500Z M411.500,66 L406.500,62.500 V69.500Z" fill="#808490" stroke="#3c4252" stroke-width=".8"/>
<!-- rotate -->
<path d="M437.500,58.500 A8.300,8.300 0 1 1 426.500,58.800" fill="none" stroke="#383838" stroke-width="4.400"/>
<path d="M437.500,58.500 A8.300,8.300 0 1 1 426.500,58.800" fill="none" stroke="url(#gRot)" stroke-width="2.800"/>
<path d="M422.500,56.500 L431.500,54 L429.500,62.500 Z" fill="#606060" stroke="#303030" stroke-width=".8"/>
<!-- scale -->
<rect x="456" y="57" width="16" height="15.700" fill="#62656c" stroke="#484a50" stroke-width=".6"/>
<rect x="456.700" y="63.700" width="9" height="8.600" fill="#fff" stroke="#e02020" stroke-width="1.200"/>
<use href="#fly" x="474" y="76"/>
<!-- pivot -->
<rect x="556.500" y="55.500" width="8" height="16.500" fill="#a4a6ae" stroke="#18207c"/>
<rect x="557" y="67" width="7" height="5" fill="#303a6c"/>
<path d="M556.500,72 a4,3.500 0 0 0 8,0" fill="none" stroke="#6a72a8" stroke-width=".8"/>
<circle cx="560.500" cy="71" r="1.700" fill="#f02020"/>
<rect x="567.500" y="55.500" width="8" height="11" fill="#eef0f8" stroke="#18207c"/>
<path d="M567.500,66.500 a4,3.500 0 0 0 8,0" fill="none" stroke="#6a72a8" stroke-width=".8"/>
<circle cx="571.500" cy="66.300" r="1.700" fill="#f02020"/>
<use href="#fly" x="577" y="76"/>
<!-- manipulate -->
<path d="M603,59 V73 M597,68 L610,62" stroke="#505868" stroke-width="1.200"/>
<circle cx="603" cy="58" r="3" fill="#f8e020" stroke="#b09000" stroke-width=".5"/><circle cx="602" cy="57" r="1.200" fill="#fff"/>
<circle cx="610.300" cy="61.600" r="2.600" fill="url(#gBall)"/><circle cx="596.800" cy="68" r="2.600" fill="url(#gBall)"/><circle cx="604.300" cy="73" r="2.800" fill="url(#gBall)"/>
<!-- snaps -->
<use href="#mag" x="637" y="65"/>
<text x="644" y="63" font-family="Liberation Sans,sans-serif" font-weight="bold" font-size="12.500" fill="#000">3</text>
<use href="#fly" x="653" y="76"/>
<use href="#mag" x="668" y="66"/>
<path d="M662,72.500 H686 M663,72.500 L675.500,53.500" stroke="#000" stroke-width="1.100" fill="none"/>
<path d="M675,57 Q682,61 683.500,70" stroke="#000" stroke-width="1" fill="none"/>
<path d="M674.500,56 l3.500,0 l-1.500,3z M683.500,71.500 l-2,-3.500 l3.500,0z" fill="#000"/>
<use href="#mag" x="700" y="66"/>
<text x="704.500" y="64" font-family="Liberation Sans,sans-serif" font-size="13" font-weight="bold" fill="#000" textLength="13" lengthAdjust="spacingAndGlyphs">%</text>
<use href="#mag" x="732" y="66"/>
<rect x="741" y="53.500" width="8.500" height="17" fill="#b0b0b0" stroke="#505050" stroke-width=".8"/>
<path d="M741,62 h8.500" stroke="#e8e8e8" stroke-width="1.200"/>
<path d="M743,59.500 l2.300,-3 l2.300,3z M743,64.500 l2.300,3 l2.300,-3z" fill="#000"/>
<!-- named sel -->
<text x="763.500" y="66" font-family="Liberation Sans,sans-serif" font-size="14" fill="#404040" letter-spacing="1.500">{}</text>
<text x="764" y="76" font-family="Liberation Sans,sans-serif" font-size="6" font-weight="bold" fill="#404040">ABC</text>
<use href="#cur" x="778.500" y="56"/>
<!-- mirror -->
<path d="M924,56 V74 L931.700,61.500 Z" fill="#3e5862" stroke="#1c2c34" stroke-width=".8"/>
<path d="M934,54 V75.500" stroke="#d0706a" stroke-width="2"/>
<path d="M943.800,56 V74 L936.300,61.500 Z" fill="#a8b8c8" stroke="#70808c" stroke-width=".8"/>
<!-- align -->
<path d="M955,66.400 L962,59.900 L968.300,66.400 L962.500,73.800 Z" fill="#4a6a74" stroke="#2c4048" stroke-width=".8"/>
<path d="M966,60 L972,54.200 L976.800,59.500 L970.700,64.700 Z" fill="#c8d8ea" stroke="#8090a0" stroke-width=".8"/>
<path d="M963,75.500 L977.700,61.200" stroke="#f04040" stroke-width="1.300"/>
<use href="#fly" x="977" y="76"/>
<!-- layers -->
<g fill="#fff" stroke="#000" stroke-width="1.050"><path d="M993.500,65.500 H1007 L1015,73.500 H1001.500Z"/><path d="M993.500,60.500 H1007 L1015,68.500 H1001.500Z"/><path d="M993.500,55.500 H1007 L1015,63.500 H1001.500Z"/></g>
<!-- curve editor -->
<rect x="1030.500" y="57.500" width="21" height="17" fill="#fff" stroke="#505050"/>
<rect x="1030" y="57" width="22" height="3" fill="#4038d8"/>
<path d="M1036.500,60 V74 M1037,62.500 H1051 M1037,65.500 H1051 M1037,68.500 H1051 M1037,71.500 H1051" stroke="#909090" stroke-width=".8"/>
<path d="M1032,62.500 h3 M1032.500,65 h2 M1032.500,67.500 h2 M1032,70 h3 M1032.500,72.500 h2" stroke="#2020c0" stroke-width=".900"/>
<path d="M1045.500,60 V74" stroke="#20b020" stroke-width="1.300"/>
<path d="M1037,68 L1041.500,63 L1045.500,67.500 L1051,68.500" stroke="#c02020" stroke-width="1" fill="none"/>
<!-- schematic -->
<rect x="1063.500" y="54.500" width="21" height="21.500" fill="#c5c5c5" stroke="#303030" stroke-width="1.300"/>
<rect x="1066.700" y="57" width="15" height="4.600" fill="#f5e030" stroke="#000" stroke-width="1.200"/>
<rect x="1066.700" y="68" width="15" height="5.500" fill="#b4b4b4" stroke="#000" stroke-width="1.400"/>
<path d="M1074.200,62 v3 M1071.500,64 h5.500 l-2.800,3z" stroke="#e02020" fill="#e02020" stroke-width="1"/>
<!-- material editor -->
<circle cx="1106.300" cy="59.300" r="4.600" fill="url(#gS1)"/><circle cx="1117.500" cy="59.300" r="4.600" fill="url(#gS2)"/><circle cx="1106.300" cy="70.400" r="4.600" fill="url(#gS3)"/><circle cx="1117.500" cy="70.400" r="4.600" fill="url(#gS4)"/>
<!-- render scene -->
<rect x="1138.500" y="53.500" width="12" height="8" fill="#fff" stroke="#505050"/><rect x="1138" y="53" width="12" height="2.500" fill="#4038d8"/>
<path d="M1139,64 q3,1 4,6 q1,5 7,6 V65 q-4,0 -6,3" fill="#4aa0a0" stroke="#206868" stroke-width=".8"/>

<!-- ===== command panel tab icons ===== -->
<g>
<path d="M982.800,90 l1,4 l3.500,-2.500 l-2,3.500 l4,1 l-4,1 l2,3.500 l-3.500,-2.500 l-1,4 l-1,-4 l-3.500,2.500 l2,-3.500 l-4,-1 l4,-1 l-2,-3.500 l3.500,2.500z" fill="#fffce8" stroke="#e8e0c0" stroke-width=".5"/>
<path d="M983.500,97 L985.500,106 L988,103.500 L992.500,109.500 L994,108 L989.500,102.500 L992.500,101.500 Z" fill="#f4f4f4" stroke="#606060" stroke-width=".9"/>
<path d="M1005,91.500 H1022 V108 H1005Z" fill="none" stroke="#404040" stroke-width=".7" stroke-dasharray="1 1.500"/>
<rect x="1004" y="90.500" width="2" height="2" fill="#000"/><rect x="1021" y="107" width="2" height="2" fill="#000"/>
<path d="M1008.500,108 A13.800,13.800 0 0 1 1022.300,94.200" fill="none" stroke="#1c2238" stroke-width="7"/>
<path d="M1008.500,108 A13.800,13.800 0 0 1 1022.300,94.200" fill="none" stroke="#6a78a8" stroke-width="5"/>
<path d="M1007,108 A15.300,15.300 0 0 1 1022.300,92.700" fill="none" stroke="#a8b4d8" stroke-width="1.200"/>
<path d="M1010,108 A12.300,12.300 0 0 1 1022.300,95.700" fill="none" stroke="#28304c" stroke-width="1.600"/>
<path d="M1043,97.500 L1035.500,104.500 M1043,97.500 L1050,104.500" stroke="#202040" stroke-width="1"/>
<path d="M1043,97.500 V104.500" stroke="#808080" stroke-width="1.600"/>
<rect x="1039.500" y="90.500" width="7" height="7" fill="url(#gBox)" stroke="#302870"/>
<rect x="1033.500" y="104.500" width="4" height="4" fill="#f0f0ff" stroke="#302870"/><rect x="1040.500" y="104.500" width="5" height="4" fill="#f0f0ff" stroke="#302870"/><rect x="1048.500" y="104.500" width="4" height="4" fill="#f0f0ff" stroke="#302870"/>
<path d="M1065,94 q-3,6 0,12 M1062.500,95 q-2.500,5 0,10" fill="none" stroke="#707070" stroke-width=".8"/>
<circle cx="1074.400" cy="100" r="6.800" fill="#dcdcdc" stroke="#101010" stroke-width="1.700"/>
<path d="M1074.400,94 v12 M1069.200,97 l10.400,6 M1069.200,103 l10.400,-6" stroke="#707070" stroke-width=".9"/>
<circle cx="1074.400" cy="100" r="1.700" fill="#e03030"/>
<rect x="1091.800" y="92" width="18.500" height="15" rx="1.500" fill="#fff" stroke="#181818" stroke-width="2"/>
<rect x="1096" y="94.500" width="3" height="8" fill="#3838c0"/><path d="M1103,95 L1107,104 H1099Z" fill="#e02020"/>
<path d="M1095,109.500 H1107" stroke="#505050" stroke-width="1.600"/><rect x="1102" y="108.200" width="2.500" height="1.500" fill="#20c020"/>
<path d="M1122,94.500 q2,-3.500 6,-3 h3 q4,0 5.500,4.500 l-1.500,0.500 q-1.500,-2.500 -4,-2 h-3 q-3,-0.500 -4.500,1.500z" fill="#404040" stroke="#202020" stroke-width=".6"/>
<path d="M1127.800,95 h3 l0.400,14 h-3.800z" fill="#202020"/><path d="M1128.500,96 h1.500 v8 h-1.500z" fill="#e03828"/>
</g>
<!-- ===== stack toolbar icons ===== -->
<g>
<path d="M984,313.500 H991" stroke="#000" stroke-width="1.300"/><path d="M991.500,309 v9 M992,310.500 h2 l1.500,-1.500 h3.500 v9 h-3.500 l-1.500,-1.500 h-2" fill="#e8e8e8" stroke="#000" stroke-width="1.200"/>
<path d="M1010.500,305 V321 M1046.500,305 V321 M1106.500,305 V321" stroke="#808080"/><path d="M1011.500,305 V321 M1047.500,305 V321 M1107.500,305 V321" stroke="#fff"/>
<rect x="1026" y="313" width="5" height="6.500" fill="#fff"/><rect x="1026" y="308" width="5" height="5" fill="#909090"/>
<path d="M1025.500,307.500 V319.500 M1031.500,307.500 V319.500" stroke="#000" stroke-width="1.300"/>
<path d="M1057.500,308 L1064,318 L1071,308" fill="none" stroke="#fff" stroke-width="1" transform="translate(1,1)"/>
<path d="M1057.500,308 L1064,318 L1071,308" fill="none" stroke="#909090" stroke-width="1" stroke-dasharray="2 1"/><circle cx="1064.200" cy="317" r="1.800" fill="none" stroke="#909090" stroke-width=".8"/>
<path d="M1083,312 v6 q4.500,2.500 9,0 v-6" fill="#f4f4f4" stroke="#000" stroke-width="1.200"/><ellipse cx="1087.500" cy="312" rx="4.500" ry="1.800" fill="#f4f4f4" stroke="#000" stroke-width="1.100"/><path d="M1085,311 q1,-4 5,-2.500" fill="none" stroke="#000" stroke-width="1.100"/>
<rect x="1117.500" y="307.500" width="12" height="11" fill="#e8e8e8" stroke="#1020a0"/><rect x="1117" y="307" width="13" height="3" fill="#1830c0"/>
<path d="M1120,313 h2 v2 h-2z M1124,313 h2 v2 h-2z M1120,316 h2 v1 h-2z" fill="#606060"/>
<path d="M1125.500,314.500 h5.500 v5.500 h-5.500z" fill="#d0d0d0" stroke="#404040" stroke-width=".8" stroke-dasharray="1.500 1"/>
</g>
<!-- ===== bottom icons ===== -->
<g>
<!-- mini curve editor -->
<rect x="13.500" y="763.500" width="16" height="5" fill="#f0f0f0" stroke="#000" stroke-width="1.200"/><path d="M15,766.500 q2,-2 4,0 t4,0 h5" fill="none" stroke="#000" stroke-width=".8"/>
<path d="M17.500,775 v-5 M15.500,772 l2,-2 l2,2 M25.500,770 v5 M23.500,773 l2,2 l2,-2" fill="none" stroke="#000" stroke-width="1"/>
<rect x="13.500" y="776.500" width="16" height="2" fill="#f0f0f0" stroke="#000" stroke-width="1"/>
<!-- lock -->
<path d="M317.500,797 v-4.300 q0,-1.200 1.200,-1.200 h3.100 q1.200,0 1.200,1.200 v4.300" fill="none" stroke="#000" stroke-width="1.200"/>
<rect x="316" y="797" width="8.300" height="6.500" fill="#000"/><path d="M316,798.800 h7 M316,800.600 h7 M316,802.300 h7" stroke="#c5c5c5" stroke-width=".500"/>
<!-- abs/offset toggle -->
<rect x="340.500" y="790.500" width="14" height="14" fill="none" stroke="#000" stroke-width="1.300"/><path d="M347.500,791 v13 M341,797.500 h13" stroke="#505050" stroke-width=".600"/><circle cx="347.500" cy="797.500" r="2.200" fill="#909090" stroke="#000" stroke-width="1.200"/>
<!-- key -->
<ellipse cx="724" cy="808.600" rx="3.200" ry="3.800" fill="none" stroke="#000" stroke-width="1.700"/><path d="M727.500,808 H743.500 M739,808 v4 M742.500,808 v3" stroke="#000" stroke-width="2" fill="none"/>
<!-- playback -->
<path d="M932,793 h2 v9 h-2z M934,797.500 l7,-4.500 v4.500 l7,-4.500 v9 l-7,-4.500 v4.500z" fill="#000"/>
<path d="M960,797.500 l7,-4.500 v9z M968.300,793 h1.800 v9 h-1.800z M971.300,793 h1.800 v9 h-1.800z" fill="#000"/>
<path d="M986,793.500 l7.500,4 l-7.500,4z" fill="#000"/>
<path d="M1018,797.500 l-7,-4.500 v9z M1004.800,793 h1.800 v9 h-1.800z M1007.800,793 h1.800 v9 h-1.800z" fill="#000"/>
<path d="M1046,793 h-2 v9 h2z M1044,797.500 l-7,-4.500 v4.500 l-7,-4.500 v9 l7,-4.500 v4.500z" fill="#000"/>
<use href="#fly" x="997" y="804"/>
<path d="M953.500,790 V805 M1025.500,790 V805 M1054.500,790 V806 M953.500,812 V828 M1054.500,812 V828 M1030.500,812 V828" stroke="#808080"/><path d="M954.500,790 V805 M1026.500,790 V805 M1055.500,790 V806 M954.500,812 V828 M1055.500,812 V828 M1031.500,812 V828" stroke="#fff"/>
<!-- key mode -->
<path d="M935,815 h1.500 v8 h-1.500z M944.500,815 h1.500 v8 h-1.500z M936.500,819 l3.500,-3 v6z M944.500,819 l-3.500,-3 v6z" fill="#000"/>
<!-- spinner -->
<rect x="1020.500" y="812.500" width="8" height="15" fill="#c5c5c5" stroke="#fff"/><path d="M1020.500,828 H1029 V812.500" fill="none" stroke="#6e6e6e"/><path d="M1020.500,820.500 h8" stroke="#6e6e6e"/>
<path d="M1022,818.500 l2.500,-3.500 l2.500,3.500z M1022,822.500 l2.500,3.500 l2.500,-3.500z" fill="#000"/>
<!-- time config -->
<rect x="1036.500" y="814" width="9" height="10.500" fill="#d8d8d8" stroke="#000" stroke-width="1.100"/><rect x="1036" y="813.500" width="10" height="2" fill="#000"/>
<circle cx="1044.500" cy="820.800" r="4" fill="#e0e0e0" stroke="#a01010" stroke-width="1.100"/><path d="M1044.500,818 v3 h2.500" fill="none" stroke="#000" stroke-width=".9"/>
<!-- zoom -->
<circle cx="1065.200" cy="794.800" r="4.500" fill="#dcdcdc" stroke="#000080" stroke-width="1.300"/><path d="M1068.500,798.500 L1073.500,804" stroke="#000080" stroke-width="2.200"/>
<!-- zoom all -->
<path d="M1085.500,790.500 h12 v10 h-12z M1091.500,790.500 v10 M1085.500,795.500 h12" fill="none" stroke="#901010" stroke-width="1.100"/>
<circle cx="1086.500" cy="798.800" r="3.800" fill="#dcdcdc" stroke="#000080" stroke-width="1.200"/><path d="M1089,801.500 L1092.500,805" stroke="#000080" stroke-width="2"/>
<!-- zoom extents -->
<path d="M1105.500,793 v-2.500 h3 M1117.500,790.500 h3 v2.500 M1105.500,802 v2.500 h3 M1117.500,804.500 h3 v-2.500" fill="none" stroke="#000" stroke-width="1.300"/>
<path d="M1107.500,794.500 l2.500,-2.500 h8 l-2.500,2.500z" fill="#fff" stroke="#000080" stroke-width="1"/><path d="M1115.500,794.500 l2.500,-2.500 v8 l-2.500,2.500z" fill="#909090" stroke="#000080" stroke-width="1"/><rect x="1107.500" y="794.500" width="8" height="8" fill="#c0c0c0" stroke="#000080" stroke-width="1.100"/>
<use href="#fly" x="1119" y="805"/>
<!-- zoom extents all -->
<path d="M1131.500,790.500 h12 v10 h-12z M1137.500,790.500 v10 M1131.500,795.500 h12" fill="none" stroke="#901010" stroke-width="1.100"/>
<path d="M1128.500,797.500 l2,-2 h6.500 l-2,2z" fill="#fff" stroke="#000080" stroke-width="1"/><path d="M1135,797.500 l2,-2 v6.500 l-2,2z" fill="#b0b0b0" stroke="#000080" stroke-width="1"/><rect x="1128.500" y="797.500" width="6.500" height="6.500" fill="#c8c8c8" stroke="#000080" stroke-width="1.100"/>
<use href="#fly" x="1142" y="805"/>
<!-- fov -->
<path d="M1059,812.500 L1075,819.300 L1059,826.300 Z" fill="#e0e0e0" stroke="#000" stroke-width="1.100"/><path d="M1059,813 L1065,816 V823 L1059,826Z" fill="#b8b8b8"/><path d="M1065,816.500 l6,2.800 l-6,2.800z" fill="#fff" stroke="#000" stroke-width=".8"/>
<use href="#fly" x="1074" y="826"/>
<!-- pan hand -->
<path d="M1082.500,819 L1084,817.800 L1086,820 L1086,814.500 Q1087,813 1088,814.500 L1088,813 Q1089.200,811.500 1090.400,813 L1090.400,812.800 Q1091.600,811.600 1092.800,813 L1092.800,814 Q1094,812.800 1095.200,814.200 L1095.200,816.500 Q1096.500,815.500 1097.500,817 L1097.500,821 L1094.500,826.500 L1088,826.500 L1085.500,823 Z" fill="#e6e6e6" stroke="#000" stroke-width=".9"/>
<path d="M1088,814.500 V819 M1090.400,813 V818.500 M1092.800,814 V818.500 M1095.200,816 V819.500" stroke="#000" stroke-width=".8" fill="none"/>
<use href="#fly" x="1097" y="826"/>
<!-- arc rotate -->
<circle cx="1111.500" cy="820.600" r="5" fill="none" stroke="#000" stroke-width="1"/><path d="M1111.500,820.600 V813 M1111.500,820.600 H1120 M1111.500,820.600 L1106,826" stroke="#000080" stroke-width="1.200"/><path d="M1111.500,811.500 l-2,3 h4z M1121.500,820.600 l-3,-2 v4z M1104.500,827.500 l1,-3.500 l2.500,2.500z" fill="#000"/>
<use href="#fly" x="1120" y="826"/>
<!-- min/max -->
<rect x="1136.500" y="820" width="7" height="6.500" fill="#c5c5c5" stroke="#000" stroke-width="1.200"/><rect x="1129.500" y="812.800" width="11" height="10.500" fill="#c5c5c5" stroke="#000080" stroke-width="1.300"/><path d="M1132,815 l5,5.500" stroke="#000" stroke-width=".9" stroke-dasharray="1.500 1"/><path d="M1131.500,814.500 h3 l-3,3z" fill="#000"/>
</g>
</svg>
<!--ICONS-END-->
</body>
</html>
